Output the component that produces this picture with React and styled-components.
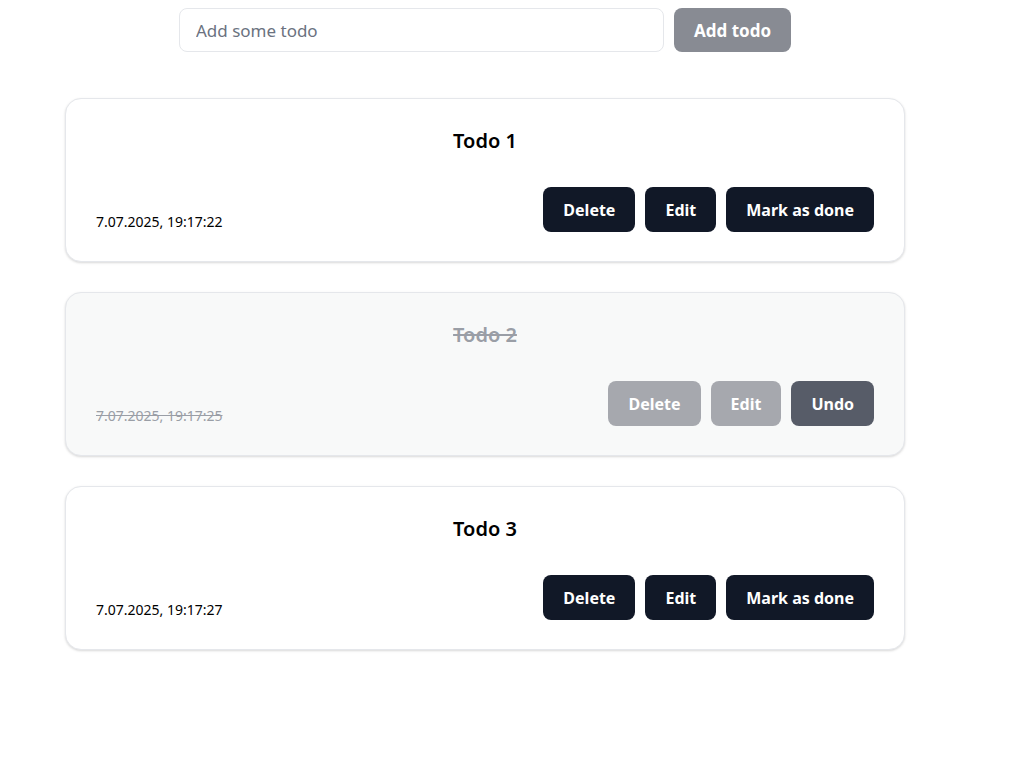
import React, { useState } from 'react';
import styled, { createGlobalStyle, css } from 'styled-components';

const GlobalStyle = createGlobalStyle`
    body {
        margin: 0;
        background: #ffffff;
        font-family: "Noto Sans", "Open Sans", sans-serif;
        color: #000000;
    }
`;

const Page = styled.div`
    width: 970px;
    padding: 8px 0 40px;
    display: flex;
    flex-direction: column;
    align-items: center;
`;

const Form = styled.form`
    display: flex;
    gap: 10px;
`;

const Input = styled.input`
    box-sizing: border-box;
    width: 485px;
    height: 44px;
    padding: 0 16px;
    border: 1px solid #e5e7eb;
    border-radius: 8px;
    font-family: inherit;
    font-size: 17px;
    color: #111827;
    outline: none;

    &::placeholder {
        color: #6b7280;
    }
`;

const Button = styled.button`
    box-sizing: border-box;
    height: ${(props) => props.$h || 45}px;
    padding: 0 20px;
    border: none;
    border-radius: 8px;
    background: ${(props) => props.$bg || '#111827'};
    color: #ffffff;
    font-family: inherit;
    font-size: ${(props) => props.$size || 16}px;
    font-weight: 700;
    cursor: pointer;
    white-space: nowrap;
`;

const List = styled.div`
    margin-top: 46px;
    display: flex;
    flex-direction: column;
    gap: 30px;
`;

const Card = styled.div`
    box-sizing: border-box;
    width: 840px;
    padding: 30px 30px 29px;
    border: 1px solid #e5e7eb;
    border-radius: 16px;
    background: ${(props) => (props.$done ? '#f8f9f9' : '#ffffff')};
    box-shadow: 0 1px 3px rgba(0, 0, 0, 0.1), 0 1px 2px rgba(0, 0, 0, 0.06);
`;

const Title = styled.h2`
    margin: 0;
    text-align: center;
    font-size: 20px;
    line-height: 24px;
    font-weight: 600;
    ${(props) => props.$done && css`
        color: #9a9ea6;
        text-decoration: line-through;
    `}
`;

const Footer = styled.div`
    margin-top: 34px;
    display: flex;
    justify-content: space-between;
    align-items: flex-end;
`;

const DateText = styled.span`
    font-size: 14px;
    line-height: 20px;
    ${(props) => props.$done && css`
        color: #9a9ea6;
        text-decoration: line-through;
    `}
`;

const Actions = styled.div`
    display: flex;
    gap: 10px;
`;

const initialTodos = [
    { id: 1, title: 'Todo 1', date: '7.07.2025, 19:17:22', done: false },
    { id: 2, title: 'Todo 2', date: '7.07.2025, 19:17:25', done: true },
    { id: 3, title: 'Todo 3', date: '7.07.2025, 19:17:27', done: false },
];

const App = () => {
    const [todos, setTodos] = useState(initialTodos);
    const [text, setText] = useState('');

    const toggle = (id) => {
        setTodos(todos.map((t) => (t.id === id ? { ...t, done: !t.done } : t)));
    };

    return (
        <>
            <GlobalStyle />
            <Page>
                <Form onSubmit={(e) => e.preventDefault()}>
                    <Input placeholder="Add some todo" value={text} onChange={(e) => setText(e.target.value)} />
                    <Button type="submit" $h={44} $size={17} $bg="#888b93">Add todo</Button>
                </Form>
                <List>
                    {todos.map((todo) => (
                        <Card key={todo.id} $done={todo.done}>
                            <Title $done={todo.done}>{todo.title}</Title>
                            <Footer>
                                <DateText $done={todo.done}>{todo.date}</DateText>
                                <Actions>
                                    <Button $bg={todo.done ? '#a6a8ae' : '#111827'}>Delete</Button>
                                    <Button $bg={todo.done ? '#a6a8ae' : '#111827'}>Edit</Button>
                                    <Button $bg={todo.done ? '#575c68' : '#111827'} onClick={() => toggle(todo.id)}>
                                        {todo.done ? 'Undo' : 'Mark as done'}
                                    </Button>
                                </Actions>
                            </Footer>
                        </Card>
                    ))}
                </List>
            </Page>
        </>
    );
};

export default App;
